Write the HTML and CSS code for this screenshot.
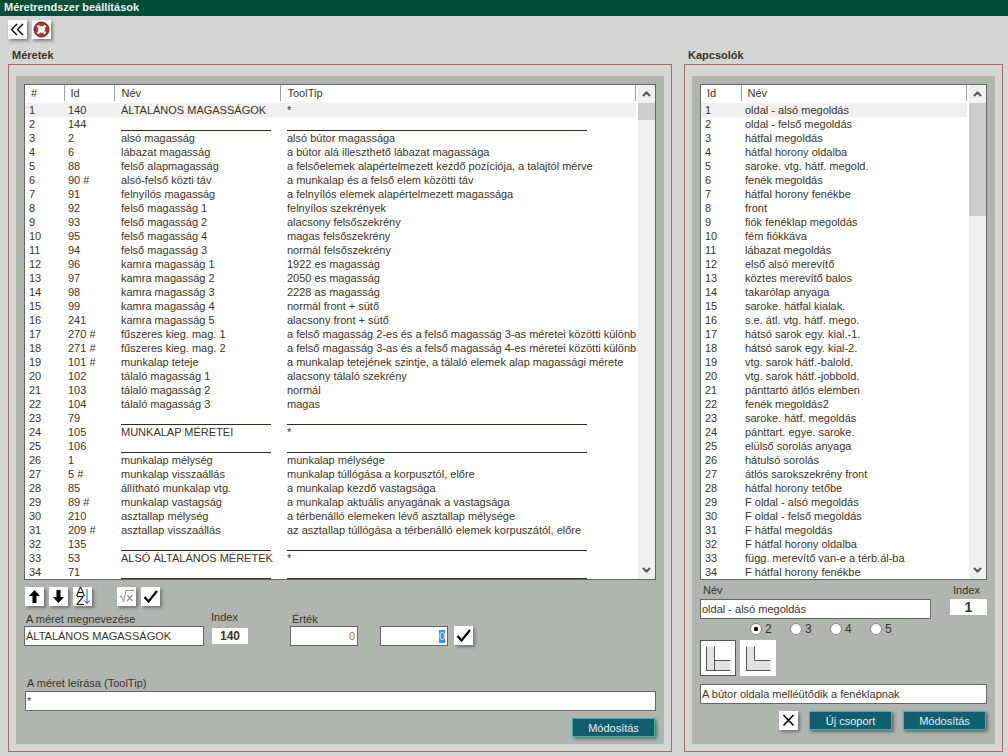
FILE: index.html
```html
<!DOCTYPE html>
<html lang="hu">
<head>
  <meta charset="UTF-8">
  <title>Méretrendszer beállítások</title>
  <link rel="stylesheet" href="styles.css">
</head>
<body>
  <header class="titlebar">Méretrendszer beállítások</header>

  <div class="toolbar">
    <button class="icon-btn" title="Vissza">
      <svg width="19" height="19" viewBox="0 0 19 19"><path d="M9 4 L3.5 9.5 L9 15 M15 4 L9.5 9.5 L15 15" fill="none" stroke="#000" stroke-width="1.4"/></svg>
    </button>
    <button class="icon-btn" title="Súgó">
      <svg width="19" height="19" viewBox="0 0 19 19"><circle cx="9.5" cy="9.5" r="6" fill="none" stroke="#d8261c" stroke-width="3"/><circle cx="9.5" cy="9.5" r="7.5" fill="none" stroke="#333" stroke-width="1"/><circle cx="9.5" cy="9.5" r="4" fill="#fff" stroke="#222" stroke-width="1"/><path d="M5.5 5.5 L7.5 7.5 M13.5 5.5 L11.5 7.5 M5.5 13.5 L7.5 11.5 M13.5 13.5 L11.5 11.5" stroke="#fff" stroke-width="2"/></svg>
    </button>
  </div>

  <main class="columns">
    <section class="group group-sizes">
      <h2>Méretek</h2>
      <div class="frame">
        <div class="panel">
          <div class="list">
            <div class="list-body">
              <table class="grid grid-sizes">
                <thead>
                  <tr><th>#</th><th>Id</th><th>Név</th><th>ToolTip</th></tr>
                </thead>
                <tbody>
                  <tr class="selected"><td>1</td><td>140</td><td>ÁLTALÁNOS MAGASSÁGOK</td><td>*</td></tr>
                  <tr><td>2</td><td>144</td><td><div class="rule"></div></td><td><div class="rule"></div></td></tr>
                  <tr><td>3</td><td>2</td><td>alsó magasság</td><td>alsó bútor magassága</td></tr>
                  <tr><td>4</td><td>6</td><td>lábazat magasság</td><td>a bútor alá illeszthető lábazat magassága</td></tr>
                  <tr><td>5</td><td>88</td><td>felső alapmagasság</td><td>a felsőelemek alapértelmezett kezdő pozíciója, a talajtól mérve</td></tr>
                  <tr><td>6</td><td>90 #</td><td>alsó-felső közti táv</td><td>a munkalap és a felső elem közötti táv</td></tr>
                  <tr><td>7</td><td>91</td><td>felnyílós magasság</td><td>a felnyílós elemek alapértelmezett magassága</td></tr>
                  <tr><td>8</td><td>92</td><td>felső magasság 1</td><td>felnyílos szekrények</td></tr>
                  <tr><td>9</td><td>93</td><td>felső magasság 2</td><td>alacsony felsőszekrény</td></tr>
                  <tr><td>10</td><td>95</td><td>felső magasság 4</td><td>magas felsőszekrény</td></tr>
                  <tr><td>11</td><td>94</td><td>felső magasság 3</td><td>normál felsőszekrény</td></tr>
                  <tr><td>12</td><td>96</td><td>kamra magasság 1</td><td>1922 es magasság</td></tr>
                  <tr><td>13</td><td>97</td><td>kamra magasság 2</td><td>2050 es magasság</td></tr>
                  <tr><td>14</td><td>98</td><td>kamra magasság 3</td><td>2228 as magasság</td></tr>
                  <tr><td>15</td><td>99</td><td>kamra magasság 4</td><td>normál front + sütő</td></tr>
                  <tr><td>16</td><td>241</td><td>kamra magasság 5</td><td>alacsony front + sütő</td></tr>
                  <tr><td>17</td><td>270 #</td><td>fűszeres kieg. mag. 1</td><td>a felső magasság 2-es és a felső magasság 3-as méretei közötti különb...</td></tr>
                  <tr><td>18</td><td>271 #</td><td>fűszeres kieg. mag. 2</td><td>a felső magasság 3-as és a felső magasság 4-es méretei közötti különb...</td></tr>
                  <tr><td>19</td><td>101 #</td><td>munkalap teteje</td><td>a munkalap tetejének szintje, a tálaló elemek alap magassági mérete</td></tr>
                  <tr><td>20</td><td>102</td><td>tálaló magasság 1</td><td>alacsony tálaló szekrény</td></tr>
                  <tr><td>21</td><td>103</td><td>tálaló magasság 2</td><td>normál</td></tr>
                  <tr><td>22</td><td>104</td><td>tálaló magasság 3</td><td>magas</td></tr>
                  <tr><td>23</td><td>79</td><td><div class="rule"></div></td><td><div class="rule"></div></td></tr>
                  <tr><td>24</td><td>105</td><td>MUNKALAP MÉRETEI</td><td>*</td></tr>
                  <tr><td>25</td><td>106</td><td><div class="rule"></div></td><td><div class="rule"></div></td></tr>
                  <tr><td>26</td><td>1</td><td>munkalap mélység</td><td>munkalap mélysége</td></tr>
                  <tr><td>27</td><td>5 #</td><td>munkalap visszaállás</td><td>munkalap túllógása a korpusztól, előre</td></tr>
                  <tr><td>28</td><td>85</td><td>állítható munkalap vtg.</td><td>a munkalap kezdő vastagsága</td></tr>
                  <tr><td>29</td><td>89 #</td><td>munkalap vastagság</td><td>a munkalap aktuális anyagának a vastagsága</td></tr>
                  <tr><td>30</td><td>210</td><td>asztallap mélység</td><td>a térbenálló elemeken lévő asztallap mélysége</td></tr>
                  <tr><td>31</td><td>209 #</td><td>asztallap visszaállás</td><td>az asztallap túllógása a térbenálló elemek korpuszától, előre</td></tr>
                  <tr><td>32</td><td>135</td><td><div class="rule"></div></td><td><div class="rule"></div></td></tr>
                  <tr><td>33</td><td>53</td><td>ALSÓ ÁLTALÁNOS MÉRETEK</td><td>*</td></tr>
                  <tr><td>34</td><td>71</td><td><div class="rule"></div></td><td><div class="rule"></div></td></tr>
                </tbody>
              </table>
            </div>
            <div class="scrollbar">
              <svg class="arrow" width="17" height="18" viewBox="0 0 17 18"><path d="M5 11 L8.5 7.5 L12 11" fill="none" stroke="#555" stroke-width="2"/></svg>
              <div class="track"><div class="thumb thumb-short"></div></div>
              <svg class="arrow" width="17" height="18" viewBox="0 0 17 18"><path d="M5 7 L8.5 10.5 L12 7" fill="none" stroke="#555" stroke-width="2"/></svg>
            </div>
          </div>

          <div class="tools">
            <button class="icon-btn" title="Fel">
              <svg width="19" height="19" viewBox="0 0 19 19"><path d="M9.5 3 L15 9 L11.5 9 L11.5 16 L7.5 16 L7.5 9 L4 9 Z" fill="#000"/></svg>
            </button>
            <button class="icon-btn" title="Le">
              <svg width="19" height="19" viewBox="0 0 19 19"><path d="M9.5 16 L15 10 L11.5 10 L11.5 3 L7.5 3 L7.5 10 L4 10 Z" fill="#000"/></svg>
            </button>
            <button class="icon-btn" title="Rendezés">
              <svg width="19" height="19" viewBox="0 0 19 19"><text x="3" y="9" class="sort-letter">A</text><text x="3" y="18" class="sort-letter">Z</text><path d="M14 2 L14 16 M11.5 13.5 L14 16.5 L16.5 13.5" fill="none" stroke="#1c48d8" stroke-width="1"/></svg>
            </button>
            <button class="icon-btn tool-gap" title="Képlet">
              <svg width="19" height="19" viewBox="0 0 19 19"><path d="M2.5 10 L4.5 9 L6.5 15 L9 3.5 L17 3.5" fill="none" stroke="#8a8f8f" stroke-width="1"/><path d="M10 8 L15.5 14 M15.5 8 L10 14" stroke="#8a8f8f" stroke-width="1.2"/></svg>
            </button>
            <button class="icon-btn" title="Rendben">
              <svg width="19" height="19" viewBox="0 0 19 19"><path d="M3.5 10 L7.5 14.5 L16 4" fill="none" stroke="#000" stroke-width="2.2"/></svg>
            </button>
          </div>

          <div class="size-form">
            <div class="field field-name">
              <label>A méret megnevezése</label>
              <div class="input">ÁLTALÁNOS MAGASSÁGOK</div>
            </div>
            <div class="field field-index">
              <label>Index</label>
              <div class="index-box">140</div>
            </div>
            <div class="field field-value">
              <label>Érték</label>
              <div class="input input-num"><span class="orange">0</span></div>
            </div>
            <div class="field field-edit">
              <div class="input input-num"><span class="sel">0</span></div>
            </div>
            <button class="icon-btn" title="Rendben">
              <svg width="19" height="19" viewBox="0 0 19 19"><path d="M3.5 10 L7.5 14.5 L16 4" fill="none" stroke="#000" stroke-width="2.2"/></svg>
            </button>
          </div>

          <div class="tooltip-field">
            <label>A méret leírása (ToolTip)</label>
            <div class="input">*</div>
          </div>

          <div class="actions">
            <button class="cmd">Módosítás</button>
          </div>
        </div>
      </div>
    </section>

    <section class="group group-switches">
      <h2>Kapcsolók</h2>
      <div class="frame">
        <div class="panel">
          <div class="list">
            <div class="list-body">
              <table class="grid grid-switches">
                <thead>
                  <tr><th>Id</th><th>Név</th></tr>
                </thead>
                <tbody>
                  <tr class="selected"><td>1</td><td>oldal - alsó megoldás</td></tr>
                  <tr><td>2</td><td>oldal - felső megoldás</td></tr>
                  <tr><td>3</td><td>hátfal megoldás</td></tr>
                  <tr><td>4</td><td>hátfal horony oldalba</td></tr>
                  <tr><td>5</td><td>saroke. vtg. hátf. megold.</td></tr>
                  <tr><td>6</td><td>fenék megoldás</td></tr>
                  <tr><td>7</td><td>hátfal horony fenékbe</td></tr>
                  <tr><td>8</td><td>front</td></tr>
                  <tr><td>9</td><td>fiók fenéklap megoldás</td></tr>
                  <tr><td>10</td><td>fém fiókkáva</td></tr>
                  <tr><td>11</td><td>lábazat megoldás</td></tr>
                  <tr><td>12</td><td>első alsó merevítő</td></tr>
                  <tr><td>13</td><td>köztes merevítő balos</td></tr>
                  <tr><td>14</td><td>takarólap anyaga</td></tr>
                  <tr><td>15</td><td>saroke. hátfal kialak.</td></tr>
                  <tr><td>16</td><td>s.e. átl. vtg. hátf. mego.</td></tr>
                  <tr><td>17</td><td>hátsó sarok egy. kial.-1.</td></tr>
                  <tr><td>18</td><td>hátsó sarok egy. kial-2.</td></tr>
                  <tr><td>19</td><td>vtg. sarok hátf.-balold.</td></tr>
                  <tr><td>20</td><td>vtg. sarok hátf.-jobbold.</td></tr>
                  <tr><td>21</td><td>pánttartó átlós elemben</td></tr>
                  <tr><td>22</td><td>fenék megoldás2</td></tr>
                  <tr><td>23</td><td>saroke. hátf. megoldás</td></tr>
                  <tr><td>24</td><td>pánttart. egye. saroke.</td></tr>
                  <tr><td>25</td><td>elülső sorolás anyaga</td></tr>
                  <tr><td>26</td><td>hátulsó sorolás</td></tr>
                  <tr><td>27</td><td>átlós sarokszekrény front</td></tr>
                  <tr><td>28</td><td>hátfal horony tetőbe</td></tr>
                  <tr><td>29</td><td>F oldal - alsó megoldás</td></tr>
                  <tr><td>30</td><td>F oldal - felső megoldás</td></tr>
                  <tr><td>31</td><td>F hátfal megoldás</td></tr>
                  <tr><td>32</td><td>F hátfal horony oldalba</td></tr>
                  <tr><td>33</td><td>függ. merevítő van-e a térb.ál-ba</td></tr>
                  <tr><td>34</td><td>F hátfal horony fenékbe</td></tr>
                </tbody>
              </table>
            </div>
            <div class="scrollbar">
              <svg class="arrow" width="17" height="18" viewBox="0 0 17 18"><path d="M5 11 L8.5 7.5 L12 11" fill="none" stroke="#555" stroke-width="2"/></svg>
              <div class="track"><div class="thumb thumb-long"></div></div>
              <svg class="arrow" width="17" height="18" viewBox="0 0 17 18"><path d="M5 7 L8.5 10.5 L12 7" fill="none" stroke="#555" stroke-width="2"/></svg>
            </div>
          </div>

          <div class="switch-form">
            <div class="field field-switch-name">
              <label>Név</label>
              <div class="input">oldal - alsó megoldás</div>
            </div>
            <div class="field field-switch-index">
              <label>Index</label>
              <div class="index-box index-large">1</div>
            </div>
          </div>

          <div class="radios">
            <label class="radio"><input type="radio" name="variant" checked> 2</label>
            <label class="radio"><input type="radio" name="variant"> 3</label>
            <label class="radio"><input type="radio" name="variant"> 4</label>
            <label class="radio"><input type="radio" name="variant"> 5</label>
          </div>

          <div class="variants">
            <div class="variant variant-active">
              <svg width="36" height="36" viewBox="0 0 36 36"><path d="M6.5 6.5 H14.5 V20.5 H30.5 V30.5 H6.5 Z" fill="#e2e2e2"/><path d="M6.5 6.5 V30.5 H30.5 M14.5 6.5 V30.5 M14.5 20.5 H30.5" fill="none" stroke="#555"/></svg>
            </div>
            <div class="variant">
              <svg width="36" height="36" viewBox="0 0 36 36"><path d="M6.5 6.5 H14.5 V20.5 H30.5 V30.5 H6.5 Z" fill="#e2e2e2"/><path d="M6.5 6.5 V30.5 H30.5 M14.5 6.5 V20.5 H30.5" fill="none" stroke="#555"/></svg>
            </div>
          </div>

          <div class="input input-note">A bútor oldala melléütődik a fenéklapnak</div>

          <div class="actions actions-switch">
            <button class="icon-btn" title="Törlés">
              <svg width="19" height="19" viewBox="0 0 19 19"><path d="M4.5 4 L14.5 14.5 M14.5 4 L4.5 14.5" stroke="#000" stroke-width="1.6"/></svg>
            </button>
            <button class="cmd">Új csoport</button>
            <button class="cmd">Módosítás</button>
          </div>
        </div>
      </div>
    </section>
  </main>
</body>
</html>
```

FILE: styles.css
```css
* {
  box-sizing: border-box;
}
html, body {
  height: 100%;
}
body {
  margin: 0;
  background-color: #d4d6d4;
  color: #3a3428;
  font-family: "Liberation Sans", Arial, sans-serif;
  font-size: 11px;
  line-height: 14px;
  overflow: hidden;
}
button {
  font-family: inherit;
  padding: 0;
  cursor: pointer;
}
label {
  display: block;
}

.titlebar {
  height: 16px;
  padding-left: 4px;
  background-color: #004d38;
  color: #f0f0f0;
  font-weight: bold;
  line-height: 15px;
}
.toolbar {
  display: flex;
  gap: 5px;
  padding: 4px 0 0 8px;
  height: 29px;
}
.icon-btn {
  width: 19px;
  height: 19px;
  flex: none;
  border: none;
  background-color: #fff;
  box-shadow: 2px 2px 3px rgba(70, 75, 70, 0.6);
}
.icon-btn svg {
  display: block;
}

.columns {
  display: flex;
  gap: 12px;
  padding: 0 5px 0 8px;
}
.group-sizes {
  width: 664px;
}
.group-switches {
  width: 319px;
}
.group h2 {
  margin: 0;
  padding: 3px 0 0 4px;
  height: 19px;
  font-size: 11px;
  line-height: 14px;
  font-weight: bold;
  color: #3a3428;
}
.frame {
  height: 688px;
  border: 1px solid #a56a6a;
  padding: 11px 7px 7px 7px;
}
.panel {
  height: 668px;
  padding: 8px;
  background-color: #b0b5b0;
}

.list {
  display: flex;
  height: 496px;
  background-color: #fff;
  border: 1px solid #666;
}
.list-body {
  flex: 1;
  min-width: 0;
  overflow: hidden;
}
.grid {
  width: 100%;
  border-collapse: collapse;
  table-layout: fixed;
}
.grid-sizes th:nth-child(1) { width: 39px; }
.grid-sizes th:nth-child(2) { width: 50px; }
.grid-sizes th:nth-child(3) { width: 166px; }
.grid-switches th:nth-child(1) { width: 40px; }
.grid th {
  height: 17px;
  padding: 0 0 0 6px;
  text-align: left;
  font-weight: normal;
  border-right: 1px solid #a0a0a0;
  border-bottom: 1px solid #a0a0a0;
  box-shadow: inset -1px 0 0 #fff;
}
.grid td {
  height: 14px;
  padding: 0 0 0 4px;
  white-space: nowrap;
  overflow: hidden;
}
.grid tbody tr:first-child td {
  padding-top: 0;
}
.grid thead tr {
  border-bottom: 2px solid #fff;
}
.grid td:nth-child(1) {
  padding-left: 4px;
}
.selected td {
  background-color: #f0f0f0;
  box-shadow: none;
}
.grid-sizes td:nth-child(3),
.grid-sizes td:nth-child(4),
.grid-sizes th:nth-child(3),
.grid-sizes th:nth-child(4) {
  padding-left: 7px;
}
.rule {
  height: 13px;
  border-bottom: 1px solid #332c1e;
}
.grid-sizes td:nth-child(3) .rule {
  width: 150px;
}
.grid-sizes td:nth-child(4) .rule {
  width: 300px;
}

.scrollbar {
  display: flex;
  flex-direction: column;
  flex: none;
  width: 19px;
  padding-left: 2px;
  background: linear-gradient(to right, #fff 2px, #f0f0f0 2px);
}
.arrow {
  flex: none;
}
.track {
  flex: 1;
}
.thumb {
  background-color: #cdcdcd;
}
.thumb-short {
  height: 17px;
}
.thumb-long {
  height: 113px;
}

.tools {
  display: flex;
  gap: 5px;
  padding: 7px 0 0 1px;
  height: 27px;
}
.tool-gap {
  margin-left: 20px;
}

.size-form {
  display: flex;
  align-items: flex-end;
  height: 39px;
  margin-top: 0;
}
.field label {
  padding-left: 2px;
  height: 14px;
}
.input {
  height: 20px;
  padding: 2px 1px;
  background-color: #fff;
  border: 1px solid #666;
  line-height: 14px;
  white-space: nowrap;
  overflow: hidden;
}
.input-num {
  text-align: right;
  padding-right: 2px;
}
.orange {
  color: #b06a20;
}
.sel {
  display: inline-block;
  background-color: #3390ff;
  color: #cfe5ff;
  line-height: 13px;
}
.field-name {
  width: 180px;
}
.field-index {
  width: 36px;
  margin-left: 8px;
  margin-bottom: 2px;
}
.field-index label {
  padding-left: 0;
  margin-left: -1px;
  margin-bottom: 4px;
}
.index-box {
  height: 16px;
  background-color: #fff;
  font-weight: bold;
  font-size: 12px;
  line-height: 17px;
  text-align: center;
}
.index-large {
  font-size: 14px;
}
.field-value {
  width: 68px;
  margin-left: 42px;
}
.field-edit {
  width: 68px;
  margin-left: 22px;
}
.size-form .icon-btn {
  margin-left: 6px;
  margin-bottom: 1px;
}

.tooltip-field {
  margin-top: 30px;
  margin-left: 1px;
}
.tooltip-field label {
  padding-left: 2px;
  height: 15px;
}
.actions {
  display: flex;
  justify-content: flex-end;
  gap: 11px;
  padding: 7px 1px 0 0;
}
.cmd {
  width: 83px;
  height: 19px;
  background-color: #115e6e;
  border: 1px solid #3db5a5;
  color: #e4eef0;
  font-size: 11px;
  box-shadow: 2px 2px 3px rgba(70, 75, 70, 0.7);
}

.switch-form {
  display: flex;
  justify-content: space-between;
  height: 36px;
  padding-top: 3px;
}
.field-switch-name {
  width: 231px;
}
.field-switch-index {
  width: 37px;
}
.field-switch-index label {
  padding-left: 3px;
  height: 16px;
}
.field-switch-name label {
  padding-left: 3px;
}
.field-switch-name .input {
  margin-top: 2px;
}

.radios {
  display: flex;
  gap: 14px;
  height: 24px;
  padding: 6px 0 0 50px;
}
.radio {
  display: flex;
  align-items: center;
  gap: 3px;
  width: 26px;
  height: 13px;
  font-size: 12px;
}
.radio input {
  appearance: none;
  flex: none;
  width: 12px;
  height: 12px;
  margin: 0;
  border: 1px solid #8a8a8a;
  border-radius: 50%;
  background-color: #fff;
}
.radio input:checked {
  background: radial-gradient(circle, #111 2px, #fff 2.5px);
}

.variants {
  display: flex;
  gap: 4px;
  height: 44px;
}
.variant {
  width: 36px;
  height: 36px;
  background-color: #fff;
}
.variant svg {
  display: block;
}
.variant-active {
  outline: 1px solid #555;
  outline-offset: -1px;
}
.input-note {
  height: 20px;
}
.actions-switch {
  align-items: flex-start;
}
```
